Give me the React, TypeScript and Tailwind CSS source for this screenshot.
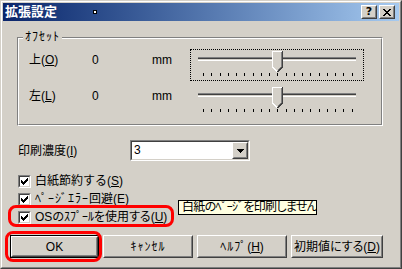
import React from 'react'

const font = "font-['Liberation_Sans','Noto_Sans_CJK_JP',sans-serif]"
const palt = "[font-feature-settings:'palt']"

function U({ children }: { children: React.ReactNode }) {
  return <span className="underline underline-offset-[1px]">{children}</span>
}

// half-width katakana run, spaced out a little like MS UI Gothic
function H({ children }: { children: React.ReactNode }) {
  return <span className="tracking-[1px]">{children}</span>
}

function Raised({ className = '', children }: { className?: string; children?: React.ReactNode }) {
  return (
    <div className={`border border-t-white border-l-white border-r-[#404040] border-b-[#404040] bg-[#d4d0c8] ${className}`}>
      <div className="flex h-full w-full items-center justify-center border border-t-[#d4d0c8] border-l-[#d4d0c8] border-r-[#808080] border-b-[#808080]">
        {children}
      </div>
    </div>
  )
}

function Sunken({ className = '', children }: { className?: string; children?: React.ReactNode }) {
  return (
    <div className={`border border-t-[#808080] border-l-[#808080] border-r-white border-b-white ${className}`}>
      <div className="flex h-full w-full border border-t-[#404040] border-l-[#404040] border-r-[#d4d0c8] border-b-[#d4d0c8] bg-white">
        {children}
      </div>
    </div>
  )
}

const ticks = Array.from({ length: 19 }, (_, i) => 12 + Math.round(i * 8.25))

function Slider({ focused }: { focused?: boolean }) {
  return (
    <div className={`h-[32px] w-[174px] border border-dotted ${focused ? 'border-black' : 'border-transparent'}`}>
      <svg width="172" height="30" shapeRendering="crispEdges">
        <rect x="7" y="7" width="158" height="1" fill="#808080" />
        <rect x="7" y="8" width="158" height="1" fill="#404040" />
        <rect x="7" y="9" width="158" height="1" fill="#d4d0c8" />
        <rect x="7" y="10" width="158" height="1" fill="#ffffff" />
        {ticks.map((t) => (
          <rect key={t} x={t} y="23" width="1" height="3" fill="#000" />
        ))}
        <polygon points="81,1 92,1 92,17 86.5,22.5 81,17" fill="#d4d0c8" />
        <polyline points="81.5,17 81.5,1.5 91,1.5" fill="none" stroke="#fff" />
        <line x1="81.5" y1="17" x2="86" y2="21.5" stroke="#fff" />
        <polyline points="91.5,1 91.5,17 86.5,22" fill="none" stroke="#404040" />
        <polyline points="90.5,2 90.5,16.5 86.5,20.5" fill="none" stroke="#808080" />
      </svg>
    </div>
  )
}

function Check() {
  const rows: [number, number, number][] = [
    [6, 0, 1], [5, 1, 2], [0, 2, 1], [4, 2, 3], [0, 3, 2], [3, 3, 3], [0, 4, 5], [1, 5, 3], [2, 6, 1],
  ]
  return (
    <Sunken className="h-[13px] w-[13px]">
      <svg width="9" height="9" shapeRendering="crispEdges">
        {rows.map(([x, y, w], i) => (
          <rect key={i} x={x + 1} y={y + 1} width={w} height="1" fill="#000" />
        ))}
      </svg>
    </Sunken>
  )
}

const checks = [
  <>白紙節約する(<U>S</U>)</>,
  <><H>ﾍﾟｰｼﾞｴﾗｰ</H>回避(E)</>,
  <>
    OS<span className={palt}>の</span>ｽﾌﾟｰﾙ<span className={palt}>を</span>使用<span className={palt}>する</span>(<U>U</U>)
  </>,
]

export default function App() {
  return (
    <div className={`relative h-[269px] w-[402px] overflow-hidden border border-t-[#d4d0c8] border-l-[#d4d0c8] border-r-[#404040] border-b-[#404040] bg-[#d4d0c8] text-[12px] leading-[14px] text-black ${font}`}>
      <div className="flex h-full flex-col border border-t-white border-l-white border-r-[#808080] border-b-[#808080] p-px">
        <div className="flex h-[18px] items-center bg-gradient-to-r from-[#0a246a] to-[#a6caf0] pl-[2px] pr-[4px]">
          <span className="text-[13px] font-bold leading-[16px] text-white">拡張設定</span>
          <span className="ml-[36px] h-[4px] w-[4px] border border-black bg-white" />
          <div className="ml-auto flex gap-[2px]">
            <Raised className="h-[14px] w-[16px]">
              <span className="font-['DejaVu_Sans',sans-serif] text-[11px] font-bold leading-[10px]">?</span>
            </Raised>
            <Raised className="h-[14px] w-[16px]">
              <svg width="8" height="7" viewBox="0 0 8 7" shapeRendering="crispEdges">
                <path d="M0 0h2v1h-2zM6 0h2v1h-2zM1 1h2v1h-2zM5 1h2v1h-2zM2 2h4v1h-4zM3 3h2v1h-2zM2 4h4v1h-4zM1 5h2v1h-2zM5 5h2v1h-2zM0 6h2v1h-2zM6 6h2v1h-2z" fill="#000" />
              </svg>
            </Raised>
          </div>
        </div>

        <div className="relative ml-[14px] mt-[16px] h-[89px] w-[366px] border border-t-[#808080] border-l-[#808080] border-r-white border-b-white">
          <div className="h-full w-full border border-t-white border-l-white border-r-[#808080] border-b-[#808080] pl-[10px] pt-[10px]">
            <div className="flex h-[32px]">
              <span className="mt-[4px] w-[63px]">上(<U>O</U>)</span>
              <span className="mt-[4px] w-[60px]">0</span>
              <span className="mt-[4px] w-[38px]">mm</span>
              <Slider focused />
            </div>
            <div className="mt-[4px] flex h-[32px]">
              <span className="mt-[4px] w-[63px]">左(<U>L</U>)</span>
              <span className="mt-[4px] w-[60px]">0</span>
              <span className="mt-[4px] w-[38px]">mm</span>
              <Slider />
            </div>
          </div>
          <span className="absolute -top-[8px] left-[5px] bg-[#d4d0c8] px-[2px]">
            <H>ｵﾌｾｯﾄ</H>
          </span>
        </div>

        <div className="mt-[14px] flex h-[21px] items-center pl-[15px]">
          <span className="w-[112px]">印刷濃度(<U>I</U>)</span>
          <Sunken className="h-[21px] w-[120px]">
            <span className="flex-1 pl-[2px] pt-[1px]">3</span>
            <Raised className="h-[17px] w-[16px]">
              <svg width="7" height="4" shapeRendering="crispEdges">
                <path d="M0 0h7v1h-7zM1 1h5v1h-5zM2 2h3v1h-3zM3 3h1v1h-1z" fill="#000" />
              </svg>
            </Raised>
          </Sunken>
        </div>

        <div className="mt-[11px] flex flex-col">
          {checks.map((c, i) => (
            <div key={i} className="flex h-[18px] items-center gap-[4px] pl-[15px]">
              <Check />
              <span>{c}</span>
            </div>
          ))}
        </div>

        <div className="mt-[9px] flex gap-[4px] pl-[7px]">
          <div className="h-[23px] w-[89px] border border-black">
            <Raised className="h-full w-full">OK</Raised>
          </div>
          <Raised className="h-[23px] w-[90px]">
            <H>ｷｬﾝｾﾙ</H>
          </Raised>
          <Raised className="h-[23px] w-[90px]">
            <H>ﾍﾙﾌﾟ</H>(<U>H</U>)
          </Raised>
          <Raised className="h-[23px] w-[92px]">
            初期値<span className={palt}>にする</span>(<U>D</U>)
          </Raised>
        </div>
      </div>

      <div className="absolute left-[7px] top-[204px] h-[22px] w-[166px] rounded-[8px] border-[3px] border-[#ff0000]" />
      <div className="absolute left-[4px] top-[230px] h-[31px] w-[97px] rounded-[8px] border-[3px] border-[#ff0000]" />
      <div className="absolute left-[177px] top-[199px] flex h-[15px] w-[139px] items-center overflow-hidden whitespace-nowrap border border-black bg-[#ffffe1] pl-[3px] leading-[13px] tracking-[-0.7px]">
        白紙<span className={palt}>の</span>ﾍﾟｰｼﾞ<span className={palt}>を</span>印刷<span className={palt}>しません</span>
      </div>
    </div>
  )
}
